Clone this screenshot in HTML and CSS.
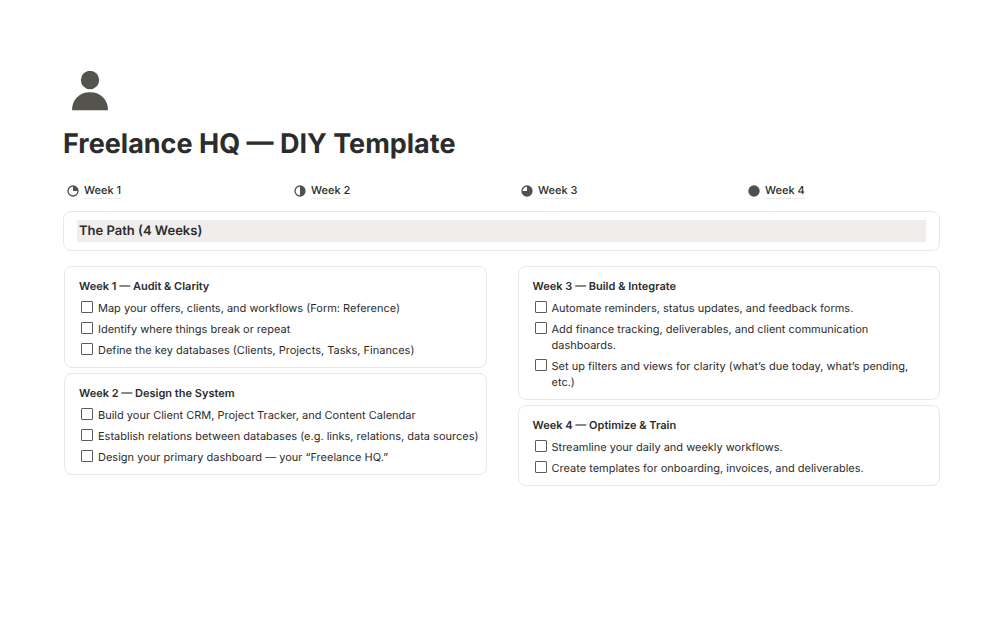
FILE: index.html
```html
<!DOCTYPE html>
<html lang="en">
<head>
<meta charset="utf-8">
<meta name="viewport" content="width=device-width, initial-scale=1">
<title>Freelance HQ — DIY Template</title>
<link rel="stylesheet" href="styles.css">
</head>
<body>
<main class="page">
  <header class="page-header">
    <svg class="page-icon" viewBox="0 0 36 40" aria-hidden="true">
      <circle cx="18" cy="9" r="9.2"/>
      <path d="M0 39.2C0 29 7 21.3 18 21.3S36 29 36 39.2Z"/>
    </svg>
    <h1 class="page-title">Freelance HQ — DIY Template</h1>
  </header>

  <nav class="weeks" aria-label="Weeks">
    <a class="week-link" href="#week-1">
      <svg class="week-icon" viewBox="0 0 12 12" aria-hidden="true"><circle class="ring" cx="6" cy="6" r="5"/><path d="M6 1A5 5 0 0 1 11 6H6Z"/></svg>
      <span class="week-name">Week 1</span>
    </a>
    <a class="week-link" href="#week-2">
      <svg class="week-icon" viewBox="0 0 12 12" aria-hidden="true"><circle class="ring" cx="6" cy="6" r="5"/><path d="M6 1A5 5 0 0 1 6 11Z"/></svg>
      <span class="week-name">Week 2</span>
    </a>
    <a class="week-link" href="#week-3">
      <svg class="week-icon" viewBox="0 0 12 12" aria-hidden="true"><circle class="ring" cx="6" cy="6" r="5"/><path d="M6 1A5 5 0 1 1 1 6H6Z"/></svg>
      <span class="week-name">Week 3</span>
    </a>
    <a class="week-link" href="#week-4">
      <svg class="week-icon" viewBox="0 0 12 12" aria-hidden="true"><circle cx="6" cy="6" r="5.7"/></svg>
      <span class="week-name">Week 4</span>
    </a>
  </nav>

  <section class="banner">
    <h2 class="banner-title">The Path (4 Weeks)</h2>
  </section>

  <div class="columns">
    <div class="column">
      <section class="card" id="week-1">
        <h3 class="card-title">Week 1 — Audit &amp; Clarity</h3>
        <ul class="tasks">
          <li><label class="task"><input class="box" type="checkbox"><span>Map your offers, clients, and workflows (Form: Reference)</span></label></li>
          <li><label class="task"><input class="box" type="checkbox"><span>Identify where things break or repeat</span></label></li>
          <li><label class="task"><input class="box" type="checkbox"><span>Define the key databases (Clients, Projects, Tasks, Finances)</span></label></li>
        </ul>
      </section>
      <section class="card" id="week-2">
        <h3 class="card-title">Week 2 — Design the System</h3>
        <ul class="tasks">
          <li><label class="task"><input class="box" type="checkbox"><span>Build your Client CRM, Project Tracker, and Content Calendar</span></label></li>
          <li><label class="task"><input class="box" type="checkbox"><span>Establish relations between databases (e.g. links, relations, data sources)</span></label></li>
          <li><label class="task"><input class="box" type="checkbox"><span>Design your primary dashboard — your “Freelance HQ.”</span></label></li>
        </ul>
      </section>
    </div>
    <div class="column">
      <section class="card" id="week-3">
        <h3 class="card-title">Week 3 — Build &amp; Integrate</h3>
        <ul class="tasks">
          <li><label class="task"><input class="box" type="checkbox"><span>Automate reminders, status updates, and feedback forms.</span></label></li>
          <li><label class="task"><input class="box" type="checkbox"><span>Add finance tracking, deliverables, and client communication dashboards.</span></label></li>
          <li><label class="task"><input class="box" type="checkbox"><span>Set up filters and views for clarity (what’s due today, what’s pending, etc.)</span></label></li>
        </ul>
      </section>
      <section class="card" id="week-4">
        <h3 class="card-title">Week 4 — Optimize &amp; Train</h3>
        <ul class="tasks">
          <li><label class="task"><input class="box" type="checkbox"><span>Streamline your daily and weekly workflows.</span></label></li>
          <li><label class="task"><input class="box" type="checkbox"><span>Create templates for onboarding, invoices, and deliverables.</span></label></li>
        </ul>
      </section>
    </div>
  </div>
</main>
</body>
</html>
```
FILE: styles.css
```css
* {
  box-sizing: border-box;
}

body {
  margin: 0;
  background: #fff;
  color: #2c2c2b;
  font-family: Inter, "Liberation Sans", sans-serif;
  font-size: 11px;
  line-height: 16px;
  text-rendering: geometricPrecision;
}

h1, h2, h3, ul {
  margin: 0;
  padding: 0;
}

.page {
  padding: 71px 65px 40px 63px;
}

.page-icon {
  display: block;
  width: 36px;
  height: 40px;
  margin-left: 9px;
  fill: #55534e;
}

.page-title {
  margin-top: 16px;
  font-size: 27px;
  font-weight: 700;
  line-height: 34px;
}

.weeks {
  display: grid;
  grid-template-columns: repeat(4, 1fr);
  gap: 31px;
  margin-top: 21px;
  padding-left: 4px;
  margin-right: -4px;
}

.week-link {
  display: flex;
  align-items: center;
  gap: 5px;
  color: inherit;
  font-weight: 500;
  text-decoration: none;
}

.week-icon {
  width: 12px;
  height: 12px;
  fill: #50504e;
}

.week-icon .ring {
  fill: none;
  stroke: #50504e;
  stroke-width: 1.3;
}

.week-name {
  border-bottom: 1px solid #ebebea;
  line-height: 16px;
}

.banner {
  margin-top: 12px;
  padding: 8px 13px;
  border: 1px solid #e8e8e7;
  border-radius: 8px;
}

.banner-title {
  padding-left: 2px;
  background: #efeeed;
  font-size: 13px;
  font-weight: 600;
  line-height: 22px;
}

.columns {
  display: grid;
  grid-template-columns: repeat(2, minmax(0, 1fr));
  align-items: start;
  gap: 31px;
  margin-top: 15px;
  padding-left: 1px;
}

.column {
  display: grid;
  gap: 5px;
}

.card {
  padding: 11px 6px 9px 14px;
  border: 1px solid #e8e8e7;
  border-radius: 8px;
}

.card-title {
  font-size: 11px;
  font-weight: 600;
}

.tasks {
  display: grid;
  gap: 5px;
  margin-top: 6px;
  list-style: none;
}

.task {
  display: flex;
  align-items: flex-start;
  gap: 5px;
  padding-left: 2px;
}

.box {
  flex: none;
  width: 12px;
  height: 12px;
  margin: 1px 0 0;
  appearance: none;
  border: 1px solid #5c5b58;
  border-radius: 1px;
  background: #fff;
}

.box:checked {
  background: #5c5b58;
}
```
